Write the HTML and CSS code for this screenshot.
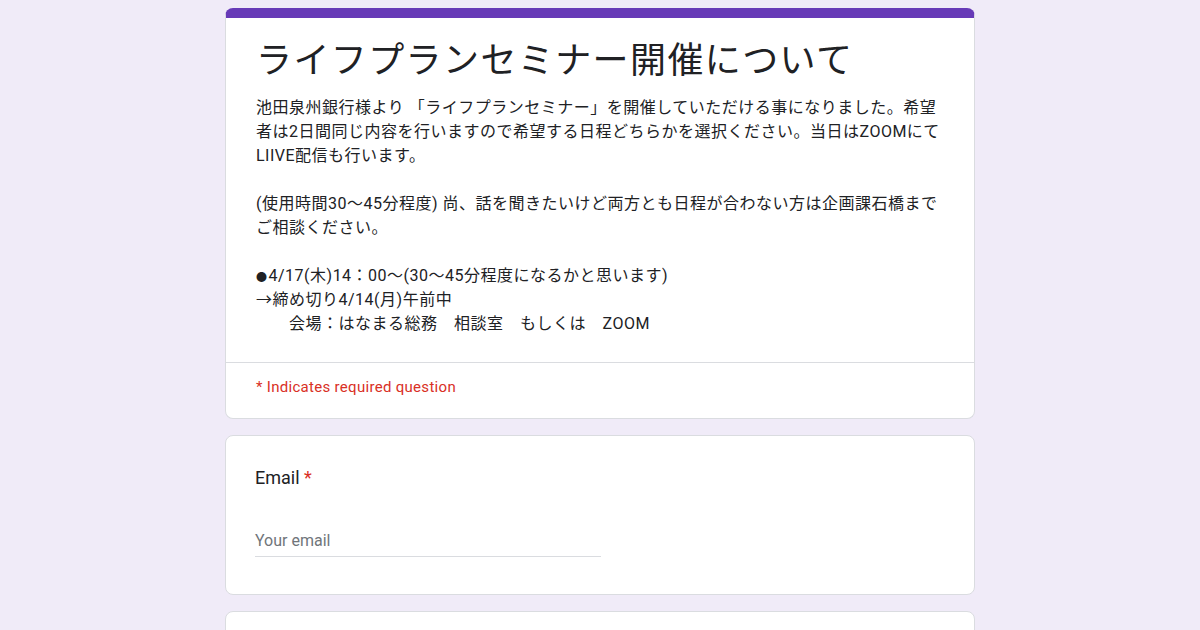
FILE: index.html
```html
<!DOCTYPE html>
<html lang="ja">
  <head>
    <meta charset="UTF-8" />
    <meta name="viewport" content="width=device-width, initial-scale=1.0" />
    <title>ライフプランセミナー開催について</title>
    <link rel="stylesheet" href="styles.css">
  </head>
  <body>
    <div class="form">
      <div class="card card-title">
        <div class="header">
          <h1>ライフプランセミナー開催について</h1>
          <div class="desc">池田泉州銀行様より 「ライフプランセミナー」を開催していただける事になりました。希望者は2日間同じ内容を行いますので希望する日程どちらかを選択ください。当日はZOOMにてLIIVE配信も行います。

(使用時間30～45分程度) 尚、話を聞きたいけど両方とも日程が合わない方は企画課石橋までご相談ください。

<span class="dot">●</span>4/17(木)14：00～(30～45分程度になるかと思います)
→締め切り4/14(月)午前中
　　会場：はなまる総務　相談室　もしくは　ZOOM</div>
        </div>
        <div class="required-note">* Indicates required question</div>
      </div>

      <div class="card question">
        <div class="label">Email <span class="star">*</span></div>
        <div class="input">Your email</div>
      </div>

      <div class="card question empty"></div>
    </div>
  </body>
</html>
```

FILE: styles.css
```css
body {
  margin: 0;
  background: #f0ebf8;
  font-family: Roboto, "Noto Sans CJK JP", sans-serif;
  color: #202124;
}

.form {
  width: 750px;
  margin: 0 auto;
  padding-top: 8px;
  display: flex;
  flex-direction: column;
  gap: 16px;
}

.card {
  background: white;
  border: 1px solid #dadce0;
  border-radius: 8px;
}

.card-title {
  border-top: 10px solid #673ab7;
}

.header {
  padding: 15px 24px 26px 30px;
}

h1 {
  margin: 0 0 15px;
  font-family: "Noto Sans CJK JP", sans-serif;
  font-size: 36px;
  font-weight: 400;
  line-height: 48px;
  letter-spacing: 1.4px;
}

.desc {
  font-size: 16px;
  line-height: 24px;
  letter-spacing: 0.5px;
  white-space: pre-wrap;
}

.dot {
  font-size: 11px;
  line-height: 1;
  margin-right: 1px;
}

.required-note {
  border-top: 1px solid #dadce0;
  padding: 12px 24px 19px 30px;
  color: #d93025;
  font-size: 15px;
  line-height: 24px;
  letter-spacing: 0.3px;
}

.question {
  padding: 30px 30px 37px 29px;
}

.label {
  font-size: 18px;
  line-height: 24px;
}

.star {
  color: #d93025;
}

.input {
  margin-top: 39px;
  width: 346px;
  font-size: 16px;
  line-height: 24px;
  color: #70757a;
  border-bottom: 1px solid #dadce0;
  padding-bottom: 3px;
}

.empty {
  height: 120px;
  padding: 0;
}
```
